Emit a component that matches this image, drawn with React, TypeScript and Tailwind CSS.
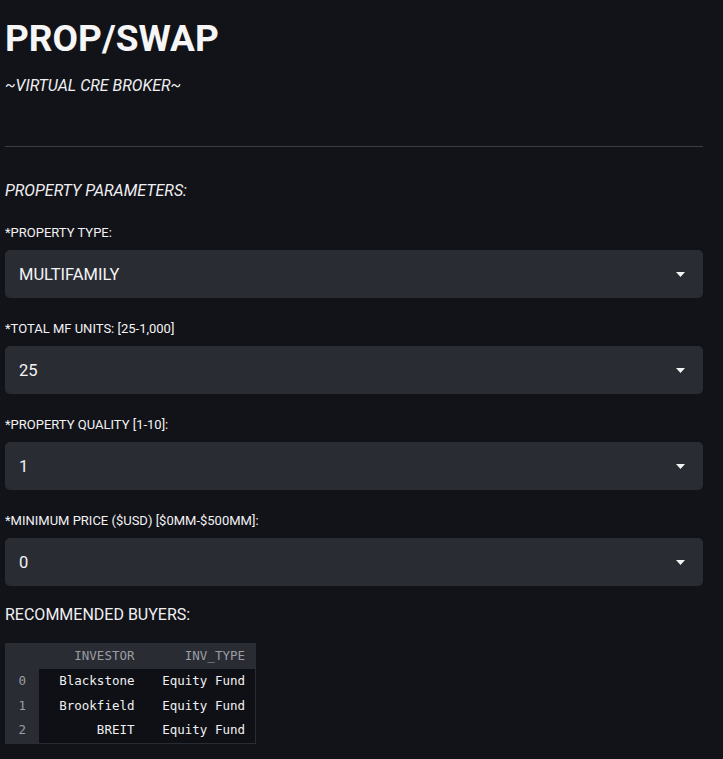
import React from "react";

const selects = [
  { label: "*PROPERTY TYPE:", value: "MULTIFAMILY" },
  { label: "*TOTAL MF UNITS: [25-1,000]", value: "25" },
  { label: "*PROPERTY QUALITY [1-10]:", value: "1" },
  { label: "*MINIMUM PRICE ($USD) [$0MM-$500MM]:", value: "0" },
];

const buyers = [
  { investor: "Blackstone", type: "Equity Fund" },
  { investor: "Brookfield", type: "Equity Fund" },
  { investor: "BREIT", type: "Equity Fund" },
];

function Caret() {
  return (
    <svg width="9" height="5" viewBox="0 0 9 5" className="shrink-0">
      <path d="M0 0 H9 L4.5 5 Z" fill="#f4f4f5" />
    </svg>
  );
}

function SelectBox({ label, value }: { label: string; value: string }) {
  return (
    <div className="mt-5">
      <div className="h-5 leading-[21px] text-[13px] text-[#f2f2f4]">{label}</div>
      <div className="mt-2 h-12 rounded-[5px] bg-[#2a2c34] flex items-center justify-between pl-[14px] pr-[18px]">
        <span className="text-[16.5px] leading-[26px] pt-px text-[#f4f4f6]">{value}</span>
        <Caret />
      </div>
    </div>
  );
}

export default function App() {
  return (
    <div
      className="min-h-screen bg-[#121318] text-white"
      style={{ fontFamily: "Roboto, 'Noto Sans', sans-serif" }}
    >
      <div className="pl-[5px] w-[703px] pb-4">
        <h1 className="pt-[16px] h-[61px] leading-[46px] text-[37px] font-bold text-[#f6f6f7]">
          PROP/SWAP
        </h1>
        <p className="mt-3 h-6 leading-[26px] text-[16px] italic text-[#f0f0f2]">
          ~VIRTUAL CRE BROKER~
        </p>
        <hr className="mt-[49px] border-0 h-px bg-[#3c3d43]" />
        <h2 className="mt-[31px] h-6 leading-[26px] text-[16px] italic text-[#f0f0f2]">
          PROPERTY PARAMETERS:
        </h2>
        {selects.map((s) => (
          <SelectBox key={s.label} label={s.label} value={s.value} />
        ))}
        <h3 className="mt-4 h-6 leading-[26px] text-[16px] text-[#f0f0f2]">
          RECOMMENDED BUYERS:
        </h3>
        <table
          className="mt-[17px] border border-[#2a2c34] border-collapse text-[12.5px]"
          style={{ fontFamily: "'DejaVu Sans Mono', 'Liberation Mono', monospace" }}
        >
          <thead>
            <tr className="h-[25px] bg-[#2a2c34] text-[#9c9da3]">
              <th className="w-[33px] font-normal"></th>
              <th className="w-[106px] font-normal text-right pr-[10px]">INVESTOR</th>
              <th className="w-[111px] font-normal text-right pr-[10px]">INV_TYPE</th>
            </tr>
          </thead>
          <tbody>
            {buyers.map((b, i) => (
              <tr key={b.investor} className="h-[25px]">
                <td className="bg-[#2a2c34] text-[#9c9da3] text-center">{i}</td>
                <td className="bg-[#0f1015] text-[#f0f0f2] text-right pr-[10px]">{b.investor}</td>
                <td className="bg-[#0f1015] text-[#f0f0f2] text-right pr-[10px]">{b.type}</td>
              </tr>
            ))}
          </tbody>
        </table>
      </div>
    </div>
  );
}
